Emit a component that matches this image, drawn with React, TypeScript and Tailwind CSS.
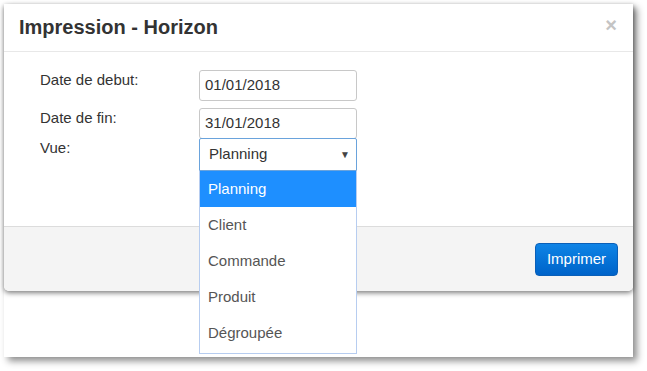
import React from "react";

export default function App() {
  const items = ["Planning", "Client", "Commande", "Produit", "Dégroupée"];
  return (
    <div className="w-[647px] h-[371px] bg-white pl-[4px] pt-[4px] overflow-hidden" style={{ fontFamily: '"Liberation Sans", Arial, sans-serif' }}>
      <div className="relative w-[629px] h-[353px] bg-white shadow-[4px_4px_7px_rgba(0,0,0,0.45)]">
        <div className="flex flex-col rounded-b-[5px] shadow-[0_2px_5px_rgba(0,0,0,0.5)]">
          <div className="h-[48px] border-b border-[#e8e8e8] flex items-center justify-between pl-[15px] pr-[16px]">
            <span className="text-[20px] font-bold text-[#333] leading-none mt-[-2px]">Impression - Horizon</span>
            <span className="text-[20px] font-bold text-[#c4c4c4] leading-none mt-[-6px]">×</span>
          </div>
          <div className="h-[174px] bg-white pt-[18px] pl-[36px] flex flex-col">
            <div className="flex">
              <div className="w-[159px] text-[15px] text-[#333] pt-[1px] leading-[18px]">Date de debut:</div>
              <div className="w-[158px] h-[31px] border border-[#c8c8c8] rounded-[3px] flex items-center pl-[5px] text-[15px] text-[#333]">01/01/2018</div>
            </div>
            <div className="flex mt-[7px]">
              <div className="w-[159px] text-[15px] text-[#333] pt-[1px] leading-[18px]">Date de fin:</div>
              <div className="w-[158px] h-[31px] border border-[#c8c8c8] rounded-[3px] flex items-center pl-[5px] text-[15px] text-[#333]">31/01/2018</div>
            </div>
            <div className="flex mt-[-1px]">
              <div className="w-[159px] text-[15px] text-[#333] pt-[1px] leading-[18px]">Vue:</div>
              <div className="w-[158px] h-[33px] border border-[#6aa3dc] rounded-t-[2px] flex items-center justify-between pl-[9px] pr-[6px] text-[15px] text-[#333]">
                <span>Planning</span>
                <span className="text-[10px] text-[#444]">▼</span>
              </div>
            </div>
          </div>
          <div className="h-[65px] bg-[#f4f4f4] border-t border-[#dcdcdc] rounded-b-[5px] flex items-center justify-end pr-[15px]">
            <button className="w-[83px] h-[33px] rounded-[4px] bg-gradient-to-b from-[#0f84e6] to-[#0063c9] border border-[#0a5fb8] text-white text-[15px] mt-[1px]">Imprimer</button>
          </div>
        </div>
        <div className="absolute left-[195px] top-[167px] w-[158px] h-[183px] bg-white border border-[#b7cdf0] border-t-0">
          {items.map((it, i) => (
            <div
              key={it}
              className={
                i === 0
                  ? "h-[36px] flex items-center pl-[8px] text-[15px] bg-[#1e8fff] text-white"
                  : "h-[36px] flex items-center pl-[8px] text-[15px] text-[#555]"
              }
            >
              {it}
            </div>
          ))}
        </div>
      </div>
    </div>
  );
}
